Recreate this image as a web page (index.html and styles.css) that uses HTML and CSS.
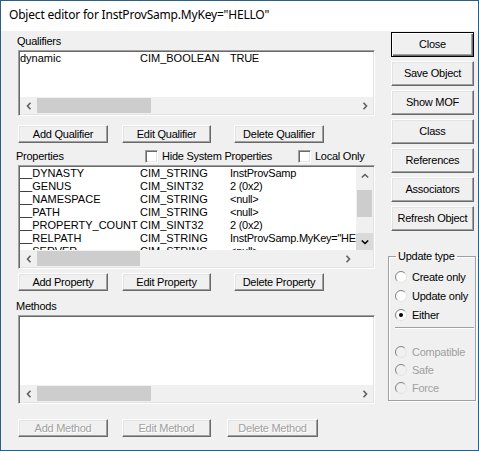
FILE: index.html
```html
<!DOCTYPE html>
<html>
<head>
<meta charset="utf-8">
<link rel="stylesheet" href="styles.css">
</head>
<body>
<div class="window">
  <div class="titlebar">Object editor for InstProvSamp.MyKey="HELLO"</div>
  <div class="client">
    <div class="leftcol">
      <div class="label qual-label">Qualifiers</div>
      <div class="listbox qual-list">
        <div class="rows">
          <div class="row"><span class="c1">dynamic</span><span class="c2">CIM_BOOLEAN</span><span class="c3">TRUE</span></div>
        </div>
        <div class="hscroll">
          <div class="arrow"><svg width="8" height="8" viewBox="0 0 8 8"><polyline points="5.5,0.8 2.5,4 5.5,7.2" fill="none" stroke="#606060" stroke-width="1.6"/></svg></div>
          <div class="track"><div class="hthumb qual-thumb"></div></div>
          <div class="arrow"><svg width="8" height="8" viewBox="0 0 8 8"><polyline points="2.5,0.8 5.5,4 2.5,7.2" fill="none" stroke="#606060" stroke-width="1.6"/></svg></div>
        </div>
      </div>
      <div class="btnrow qual-btns">
        <div class="btn b-add">Add Qualifier</div>
        <div class="btn b-edit">Edit Qualifier</div>
        <div class="btn b-del">Delete Qualifier</div>
      </div>
      <div class="prop-header">
        <div class="prop-label">Properties</div>
        <div class="check hide-sys"><span class="box"></span><span>Hide System Properties</span></div>
        <div class="check"><span class="box"></span><span>Local Only</span></div>
      </div>
      <div class="listbox prop-list">
        <div class="prop-main">
          <div class="rows prop-rows">
            <div class="row"><span class="c1">__DYNASTY</span><span class="c2">CIM_STRING</span><span class="c3">InstProvSamp</span></div>
            <div class="row"><span class="c1">__GENUS</span><span class="c2">CIM_SINT32</span><span class="c3">2 (0x2)</span></div>
            <div class="row"><span class="c1">__NAMESPACE</span><span class="c2">CIM_STRING</span><span class="c3">&lt;null&gt;</span></div>
            <div class="row"><span class="c1">__PATH</span><span class="c2">CIM_STRING</span><span class="c3">&lt;null&gt;</span></div>
            <div class="row"><span class="c1">__PROPERTY_COUNT</span><span class="c2">CIM_SINT32</span><span class="c3">2 (0x2)</span></div>
            <div class="row"><span class="c1">__RELPATH</span><span class="c2">CIM_STRING</span><span class="c3">InstProvSamp.MyKey="HELLO"</span></div>
            <div class="row"><span class="c1">__SERVER</span><span class="c2">CIM_STRING</span><span class="c3">&lt;null&gt;</span></div>
          </div>
          <div class="vscroll">
            <div class="varrow"><svg width="8" height="8" viewBox="0 0 8 8"><polyline points="0.8,5.5 4,2.5 7.2,5.5" fill="none" stroke="#606060" stroke-width="1.6"/></svg></div>
            <div class="vtrack"><div class="vthumb"></div></div>
            <div class="varrow hot"><svg width="8" height="8" viewBox="0 0 8 8"><polyline points="0.8,2.5 4,5.5 7.2,2.5" fill="none" stroke="#000" stroke-width="1.6"/></svg></div>
          </div>
        </div>
        <div class="hrow">
          <div class="hscroll grow">
            <div class="arrow"><svg width="8" height="8" viewBox="0 0 8 8"><polyline points="5.5,0.8 2.5,4 5.5,7.2" fill="none" stroke="#606060" stroke-width="1.6"/></svg></div>
            <div class="track"><div class="hthumb prop-thumb"></div></div>
            <div class="arrow"><svg width="8" height="8" viewBox="0 0 8 8"><polyline points="2.5,0.8 5.5,4 2.5,7.2" fill="none" stroke="#606060" stroke-width="1.6"/></svg></div>
          </div>
          <div class="corner"></div>
        </div>
      </div>
      <div class="btnrow prop-btns">
        <div class="btn b-add">Add Property</div>
        <div class="btn b-edit">Edit Property</div>
        <div class="btn b-del">Delete Property</div>
      </div>
      <div class="label meth-label">Methods</div>
      <div class="listbox meth-list">
        <div class="rows"></div>
        <div class="hscroll">
          <div class="arrow"><svg width="8" height="8" viewBox="0 0 8 8"><polyline points="5.5,0.8 2.5,4 5.5,7.2" fill="none" stroke="#606060" stroke-width="1.6"/></svg></div>
          <div class="track"><div class="hthumb meth-thumb"></div></div>
          <div class="arrow"><svg width="8" height="8" viewBox="0 0 8 8"><polyline points="2.5,0.8 5.5,4 2.5,7.2" fill="none" stroke="#606060" stroke-width="1.6"/></svg></div>
        </div>
      </div>
      <div class="btnrow meth-btns">
        <div class="btn disabled b-add">Add Method</div>
        <div class="btn disabled b-edit">Edit Method</div>
        <div class="btn disabled b-mdel">Delete Method</div>
      </div>
    </div>
    <div class="rightcol">
      <div class="btn side default">Close</div>
      <div class="btn side">Save Object</div>
      <div class="btn side">Show MOF</div>
      <div class="btn side">Class</div>
      <div class="btn side">References</div>
      <div class="btn side">Associators</div>
      <div class="btn side">Refresh Object</div>
      <fieldset class="group">
        <legend>Update type</legend>
        <div class="radio r1"><svg class="rb" width="12" height="12" viewBox="0 0 12 12"><defs><linearGradient id="g1" x1="0" y1="0" x2="1" y2="1"><stop offset="0.45" stop-color="#808080"/><stop offset="0.55" stop-color="#e3e3e3"/></linearGradient></defs><circle cx="6" cy="6" r="5.5" fill="#fff" stroke="url(#g1)"/></svg><span>Create only</span></div>
        <div class="radio r1"><svg class="rb" width="12" height="12" viewBox="0 0 12 12"><circle cx="6" cy="6" r="5.5" fill="#fff" stroke="url(#g1)"/></svg><span>Update only</span></div>
        <div class="radio r1"><svg class="rb" width="12" height="12" viewBox="0 0 12 12"><circle cx="6" cy="6" r="5.5" fill="#fff" stroke="url(#g1)"/><circle cx="6" cy="6" r="2" fill="#000"/></svg><span>Either</span></div>
        <div class="sep"></div>
        <div class="radio r2 dis"><svg class="rb" width="12" height="12" viewBox="0 0 12 12"><circle cx="6" cy="6" r="5.5" fill="#f0f0f0" stroke="url(#g1)"/></svg><span>Compatible</span></div>
        <div class="radio r2 dis"><svg class="rb" width="12" height="12" viewBox="0 0 12 12"><circle cx="6" cy="6" r="5.5" fill="#f0f0f0" stroke="url(#g1)"/></svg><span>Safe</span></div>
        <div class="radio r2 dis"><svg class="rb" width="12" height="12" viewBox="0 0 12 12"><circle cx="6" cy="6" r="5.5" fill="#f0f0f0" stroke="url(#g1)"/></svg><span>Force</span></div>
      </fieldset>
    </div>
  </div>
</div>
</body>
</html>
```
FILE: styles.css
```css
* { box-sizing: border-box; }
html, body { margin: 0; padding: 0; }
body {
  width: 479px;
  height: 451px;
  background: #f0f0f0;
  font-family: "Liberation Sans", Arial, sans-serif;
  font-size: 11px;
  letter-spacing: -0.25px;
  color: #000;
  overflow: hidden;
}
.window {
  width: 479px;
  height: 451px;
  border: 1px solid #2a5f86;
  background: #f0f0f0;
  display: flex;
  flex-direction: column;
}
.titlebar {
  flex: none;
  height: 30px;
  background: #fff;
  font-family: "Noto Sans", "Open Sans", sans-serif;
  font-size: 12px;
  letter-spacing: -0.2px;
  line-height: 28px;
  padding-left: 8px;
  white-space: nowrap;
}
.client {
  flex: 1;
  display: flex;
  padding-left: 15px;
}
.leftcol {
  width: 359px;
  display: flex;
  flex-direction: column;
}
.label {
  height: 13px;
  line-height: 13px;
  white-space: nowrap;
}
.qual-label { margin-top: 4px; padding-left: 1px; }
.meth-label { margin-top: 9px; }

.listbox {
  margin-left: 2px;
  width: 357px;
  background: #fff;
  border: 1px solid;
  border-color: #a0a0a0 #fff #fff #a0a0a0;
  box-shadow: inset 1px 1px #696969, inset -1px -1px #e3e3e3;
  padding: 1px;
  display: flex;
  flex-direction: column;
}
.qual-list { margin-top: 2px; height: 66px; }
.prop-list { margin-top: 2px; height: 104px; }
.meth-list { margin-top: 2px; height: 89px; }

.rows { flex: 1; overflow: hidden; }
.row {
  height: 13px;
  line-height: 13px;
  display: flex;
  white-space: nowrap;
}
.c1 { width: 120px; flex: none; letter-spacing: 0; }
.c2 { width: 90px; flex: none; letter-spacing: 0; }
.c3 { flex: none; }

.hscroll {
  flex: none;
  height: 17px;
  display: flex;
  background: #f0f0f0;
}
.hscroll.grow { flex: 1; }
.arrow {
  width: 17px;
  flex: none;
  display: flex;
  align-items: center;
  justify-content: center;
}
.track { flex: 1; display: flex; align-items: center; }
.hthumb { height: 15px; background: #cdcdcd; }
.qual-thumb { width: 114px; }
.prop-thumb { width: 103px; }
.meth-thumb { width: 114px; }

.prop-main { flex: 1; display: flex; overflow: hidden; }
.prop-rows { flex: 1; overflow: hidden; }
.vscroll {
  width: 17px;
  flex: none;
  background: #f0f0f0;
  display: flex;
  flex-direction: column;
}
.varrow {
  height: 17px;
  flex: none;
  display: flex;
  align-items: center;
  justify-content: center;
}
.varrow.hot { background: #dadada; }
.vtrack { flex: 1; display: flex; flex-direction: column; align-items: center; }
.vthumb { width: 15px; height: 27px; margin-top: 6px; background: #cdcdcd; }
.hrow { flex: none; height: 17px; display: flex; }
.corner { width: 17px; background: #f0f0f0; }

.btnrow { display: flex; margin-left: 2px; }
.qual-btns { margin-top: 9px; }
.prop-btns { margin-top: 4px; }
.meth-btns { margin-top: 15px; }

.btn {
  height: 18px;
  line-height: 16px;
  text-align: center;
  white-space: nowrap;
  background: #f0f0f0;
  border: 1px solid;
  border-color: #fff #696969 #696969 #fff;
  box-shadow: inset -1px -1px #a0a0a0, inset 1px 1px #e3e3e3;
  flex: none;
}
.b-add { width: 90px; }
.b-edit { width: 89px; margin-left: 14px; }
.b-del { width: 90px; margin-left: 23px; }
.b-mdel { width: 91px; margin-left: 16px; }
.btn.disabled { color: #a0a0a0; text-shadow: 1px 1px #fff; }

.prop-header {
  margin-top: 7px;
  height: 13px;
  display: flex;
  align-items: center;
  white-space: nowrap;
}
.prop-label { width: 129px; flex: none; line-height: 13px; }
.check { display: flex; align-items: center; line-height: 13px; }
.hide-sys { width: 153px; flex: none; }
.box {
  width: 13px;
  height: 13px;
  background: #fff;
  border: 1px solid;
  border-color: #a0a0a0 #fff #fff #a0a0a0;
  box-shadow: inset 1px 1px #696969, inset -1px -1px #e3e3e3;
  margin-right: 4px;
  flex: none;
}

.rightcol {
  margin-left: 13px;
  width: 88px;
  display: flex;
  flex-direction: column;
}
.btn.side {
  width: 83px;
  height: 25px;
  line-height: 23px;
  margin-left: 3px;
  margin-top: 4px;
}
.btn.side.default {
  margin-top: 1px;
  border: 1px solid #000;
  box-shadow: inset 1px 1px #fff, inset -1px -1px #696969, inset -2px -2px #a0a0a0;
}

.group {
  margin: 18px 0 0 0;
  width: 88px;
  padding: 4px 1px 3px 6px;
  border: 1px solid #a0a0a0;
  box-shadow: inset 1px 1px #fff, 1px 1px #fff;
  min-width: 0;
}
.group legend {
  margin-left: 1px;
  padding: 0 2px;
  line-height: 14px;
  height: 14px;
  white-space: nowrap;
}
.radio {
  display: flex;
  align-items: center;
  white-space: nowrap;
}
.radio.r1 { height: 19px; }
.radio.r2 { height: 18px; }
.rb { flex: none; margin-right: 5px; }
.radio.dis { color: #a0a0a0; }
.sep {
  margin-top: 3px;
  margin-bottom: 14px;
  height: 2px;
  border-top: 1px solid #a0a0a0;
  border-bottom: 1px solid #fff;
}
```
